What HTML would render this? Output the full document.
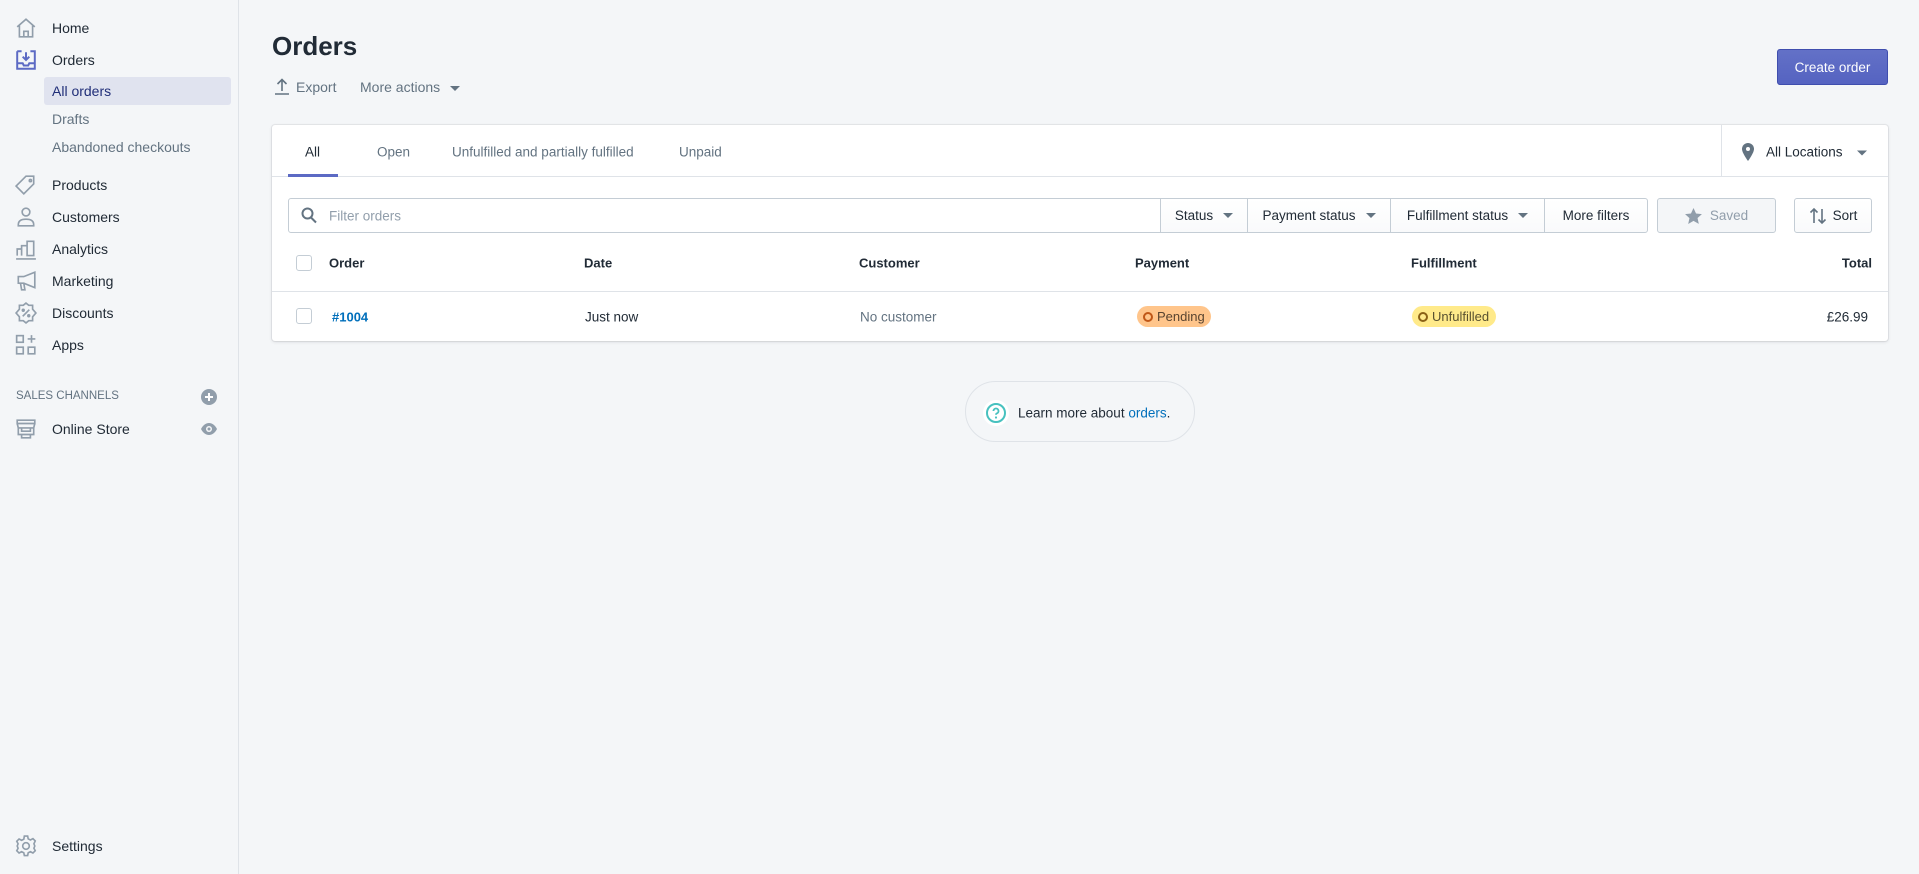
<!DOCTYPE html>
<html><head><meta charset="utf-8"><style>
*{box-sizing:border-box;margin:0;padding:0}
body{width:1919px;height:874px;background:#f4f6f8;font-family:"Liberation Sans",sans-serif;font-size:13.5px;color:#212b36;position:relative;overflow:hidden}
.a{position:absolute;white-space:nowrap}
.sb{position:absolute;left:0;top:0;width:239px;height:874px;border-right:1px solid #dfe3e8;background:#f4f6f8}
.ni{position:absolute;left:52px;font-size:14px;color:#212b36;transform:translateY(-50%)}
.sub{color:#637381}
.ic{position:absolute;left:15px;width:22px;height:22px;transform:translateY(-50%)}
.card{position:absolute;left:272px;top:125px;width:1616px;height:216px;background:#fff;border-radius:3px;box-shadow:0 0 0 1px rgba(63,63,68,.07),0 1px 3px rgba(63,63,68,.15)}
.mid{transform:translateY(-50%)}
.btn{position:absolute;top:198px;height:35px;border:1px solid #c4cdd5;background:linear-gradient(#fff,#f9fafb);display:flex;align-items:center;justify-content:center;font-size:13.5px;color:#212b36}
.car{display:inline-block;width:0;height:0;border-left:5px solid transparent;border-right:5px solid transparent;border-top:5px solid #637381;margin-left:10px}
.badge{position:absolute;top:306px;height:21px;border-radius:11px;font-size:13px;display:flex;align-items:center;padding:0 8px 0 6px}
.dot{flex:0 0 10px;width:10px;height:10px;border-radius:50%;border:2px solid;margin-right:4px}
</style></head><body>
<div class="sb">
<svg class="ic" style="top:28px" viewBox="0 0 20 20" fill="none" stroke="#919eab" stroke-width="1.5"><path d="M2 9 10 2l8 7M4 7.5V18h12V7.5M8 18v-5h4v5"/></svg>
<div class="ni" style="top:28px">Home</div>
<svg class="ic" style="top:60px" viewBox="0 0 20 20" fill="none" stroke="#5c6ac4" stroke-width="1.8"><path d="M2 2h4M14 2h4v16H2V2M2 13h5l1 2h4l1-2h5M10 3v7M7 7l3 3 3-3"/></svg>
<div class="ni" style="top:60px">Orders</div>
<div class="a" style="left:44px;top:77px;width:187px;height:28px;background:#e0e3ef;border-radius:3px"></div>
<div class="ni" style="top:91px;color:#202e78">All orders</div>
<div class="ni sub" style="top:119px">Drafts</div>
<div class="ni sub" style="top:147px">Abandoned checkouts</div>
<svg class="ic" style="top:185px" viewBox="0 0 20 20" fill="none" stroke="#919eab" stroke-width="1.5"><path d="M10 2h7v7l-9 9-7-7z"/><circle cx="14" cy="6" r="1"/></svg>
<div class="ni" style="top:185px">Products</div>
<svg class="ic" style="top:217px" viewBox="0 0 20 20" fill="none" stroke="#919eab" stroke-width="1.5"><circle cx="10" cy="5.5" r="3.5"/><path d="M3 17c0-4 3-5 7-5s7 1 7 5v1H3z"/></svg>
<div class="ni" style="top:217px">Customers</div>
<svg class="ic" style="top:249px" viewBox="0 0 20 20" fill="none" stroke="#919eab" stroke-width="1.5"><path d="M1 19h18M2 16V10h4v6M6 16V7h5v9M11 16V3h6v13z"/></svg>
<div class="ni" style="top:249px">Analytics</div>
<svg class="ic" style="top:281px" viewBox="0 0 20 20" fill="none" stroke="#919eab" stroke-width="1.5"><path d="M18 2v14L8 12H3V6h5zM5 12l1 6h3l-1-6"/></svg>
<div class="ni" style="top:281px">Marketing</div>
<svg class="ic" style="top:313px" viewBox="0 0 20 20" fill="none" stroke="#919eab" stroke-width="1.5"><path d="M10 1l2.5 2H16v3.5L19 10l-3 3.5V17h-3.5L10 19l-2.5-2H4v-3.5L1 10l3-3.5V3h3.5z"/><path d="M7 13l6-6"/><circle cx="7.5" cy="7.5" r=".8"/><circle cx="12.5" cy="12.5" r=".8"/></svg>
<div class="ni" style="top:313px">Discounts</div>
<svg class="ic" style="top:345px" viewBox="0 0 20 20" fill="none" stroke="#919eab" stroke-width="1.5"><rect x="1.5" y="1.5" width="6" height="6"/><rect x="1.5" y="12" width="6" height="6"/><rect x="12" y="12" width="6" height="6"/><path d="M15 1v7M11.5 4.5h7"/></svg>
<div class="ni" style="top:345px">Apps</div>
<div class="a" style="left:16px;top:390px;font-size:11.5px;color:#637381">SALES CHANNELS</div>
<svg class="a" style="left:201px;top:389px" width="16" height="16" viewBox="0 0 16 16"><circle cx="8" cy="8" r="8" fill="#919eab"/><path d="M8 4v8M4 8h8" stroke="#fff" stroke-width="2"/></svg>
<svg class="ic" style="top:429px" viewBox="0 0 20 20" fill="none" stroke="#919eab" stroke-width="1.5"><path d="M2 2h16v3H2zM2 5l1 4h14l1-4M3 9v6h14V9M6 15v3h8v-3M6 9v3h8V9"/></svg>
<div class="ni" style="top:429px">Online Store</div>
<svg class="a" style="left:200px;top:421px" width="18" height="16" viewBox="0 0 18 16"><path d="M1 8c2-4 5-6 8-6s6 2 8 6c-2 4-5 6-8 6s-6-2-8-6z" fill="#919eab"/><circle cx="9" cy="8" r="3" fill="#f4f6f8"/><circle cx="9" cy="8" r="1.5" fill="#919eab"/></svg>
<svg class="ic" style="top:846px" viewBox="0 0 20 20" fill="none" stroke="#919eab" stroke-width="1.5"><path d="M8.5 1h3l.5 2.5 2 1 2.3-1.2 2.1 2.1L17.2 8l.8 2-.8 2 1.2 2.3-2.1 2.1-2.3-1.2-2 1-.5 2.5h-3L8 16.2l-2-1-2.3 1.2-2.1-2.1L2.8 12 2 10l.8-2-1.2-2.3 2.1-2.1L6 4.8l2-1z"/><circle cx="10" cy="10" r="3"/></svg>
<div class="ni" style="top:846px">Settings</div>
</div>

<div class="a" style="left:272px;top:31px;font-size:26px;font-weight:bold;color:#212b36">Orders</div>
<svg class="a" style="left:274px;top:78px" width="16" height="17" viewBox="0 0 16 17" fill="none" stroke="#637381" stroke-width="1.6"><path d="M8 13V2M3.5 6 8 1.5 12.5 6M1 16h14"/></svg>
<div class="a mid" style="left:296px;top:87px;color:#637381;font-size:14px">Export</div>
<div class="a mid" style="left:360px;top:87px;color:#637381;font-size:14px">More actions<span class="car" style="vertical-align:middle"></span></div>
<div class="a" style="left:1777px;top:49px;width:111px;height:36px;border-radius:3px;background:linear-gradient(#6371c7,#5563c1);border:1px solid #3f4eae;color:#fff;display:flex;align-items:center;justify-content:center;font-size:13.5px">Create order</div>

<div class="card"></div>
<div class="a" style="left:272px;top:176px;width:1616px;height:1px;background:#dfe3e8"></div>
<div class="a" style="left:1721px;top:125px;width:1px;height:51px;background:#dfe3e8"></div>
<div class="a" style="left:288px;top:174px;width:50px;height:3px;background:#5c6ac4"></div>
<div class="a mid" style="left:305px;top:152px">All</div>
<div class="a mid" style="left:377px;top:152px;color:#637381">Open</div>
<div class="a mid" style="left:452px;top:152px;color:#637381">Unfulfilled and partially fulfilled</div>
<div class="a mid" style="left:679px;top:152px;color:#637381">Unpaid</div>
<svg class="a" style="left:1742px;top:143px" width="12" height="18" viewBox="0 0 12 18"><path d="M6 0a6 6 0 0 0-6 6c0 4 6 12 6 12s6-8 6-12a6 6 0 0 0-6-6z" fill="#637381"/><circle cx="6" cy="6" r="2" fill="#fff"/></svg>
<div class="a mid" style="left:1766px;top:152px">All Locations<span class="car" style="margin-left:14px;vertical-align:middle"></span></div>

<div class="a" style="left:288px;top:198px;width:873px;height:35px;border:1px solid #c4cdd5;border-radius:3px 0 0 3px"></div>
<svg class="a" style="left:301px;top:207px" width="16" height="17" viewBox="0 0 16 17" fill="none" stroke="#637381" stroke-width="2"><circle cx="6.5" cy="6.5" r="5"/><path d="M10 10.5l5 5"/></svg>
<div class="a mid" style="left:329px;top:216px;color:#919eab">Filter orders</div>
<div class="btn" style="left:1160px;width:88px">Status<span class="car"></span></div>
<div class="btn" style="left:1247px;width:144px">Payment status<span class="car"></span></div>
<div class="btn" style="left:1390px;width:155px">Fulfillment status<span class="car"></span></div>
<div class="btn" style="left:1544px;width:104px;border-radius:0 3px 3px 0">More filters</div>
<div class="btn" style="left:1657px;width:119px;border-radius:3px;background:#f4f6f8;color:#919eab"><svg width="17" height="16" viewBox="0 0 20 19" style="margin-right:8px"><path d="M10 0l3 6.5 7 .7-5.2 4.7 1.5 7L10 15.3 3.7 19l1.5-7L0 7.2l7-.7z" fill="#919eab"/></svg>Saved</div>
<div class="btn" style="left:1794px;width:78px;border-radius:3px"><svg width="18" height="18" viewBox="0 0 18 18" fill="none" stroke="#637381" stroke-width="1.6" style="margin-right:6px"><path d="M5 16V2M1.5 5.5 5 2l3.5 3.5M13 2v14M9.5 12.5 13 16l3.5-3.5"/></svg>Sort</div>

<div class="a" style="left:296px;top:255px;width:16px;height:16px;border:1px solid #c4cdd5;border-radius:3px"></div>
<div class="a mid" style="left:329px;top:263px;font-weight:bold;font-size:13px">Order</div>
<div class="a mid" style="left:584px;top:263px;font-weight:bold;font-size:13px">Date</div>
<div class="a mid" style="left:859px;top:263px;font-weight:bold;font-size:13px">Customer</div>
<div class="a mid" style="left:1135px;top:263px;font-weight:bold;font-size:13px">Payment</div>
<div class="a mid" style="left:1411px;top:263px;font-weight:bold;font-size:13px">Fulfillment</div>
<div class="a mid" style="right:47px;top:263px;font-weight:bold;font-size:13px">Total</div>
<div class="a" style="left:272px;top:291px;width:1616px;height:1px;background:#dfe3e8"></div>
<div class="a" style="left:296px;top:308px;width:16px;height:16px;border:1px solid #c4cdd5;border-radius:3px"></div>
<div class="a mid" style="left:332px;top:317px;color:#006fbb;font-weight:bold;font-size:13px">#1004</div>
<div class="a mid" style="left:585px;top:317px">Just now</div>
<div class="a mid" style="left:860px;top:317px;color:#637381">No customer</div>
<div class="badge" style="left:1137px;width:74px;background:#ffc58b;color:#594430"><span class="dot" style="border-color:#c05717"></span>Pending</div>
<div class="badge" style="left:1412px;width:84px;background:#ffea8a;color:#595130"><span class="dot" style="border-color:#8a6116"></span>Unfulfilled</div>
<div class="a mid" style="right:51px;top:317px">£26.99</div>

<div class="a" style="left:965px;top:381px;width:230px;height:61px;border:1px solid #dfe3e8;border-radius:31px"></div>
<svg class="a" style="left:983px;top:400px" width="26" height="26" viewBox="0 0 26 26"><circle cx="13" cy="13" r="13" fill="#fff"/><circle cx="13" cy="13" r="9" fill="none" stroke="#47c1bf" stroke-width="2"/><path d="M10.5 11a2.5 2.5 0 1 1 3.5 2.3c-.7.3-1 .8-1 1.5" fill="none" stroke="#47c1bf" stroke-width="1.8"/><circle cx="13" cy="17.5" r="1.1" fill="#47c1bf"/></svg>
<div class="a mid" style="left:1018px;top:413px">Learn more about <span style="color:#006fbb">orders</span>.</div>
</body></html>
